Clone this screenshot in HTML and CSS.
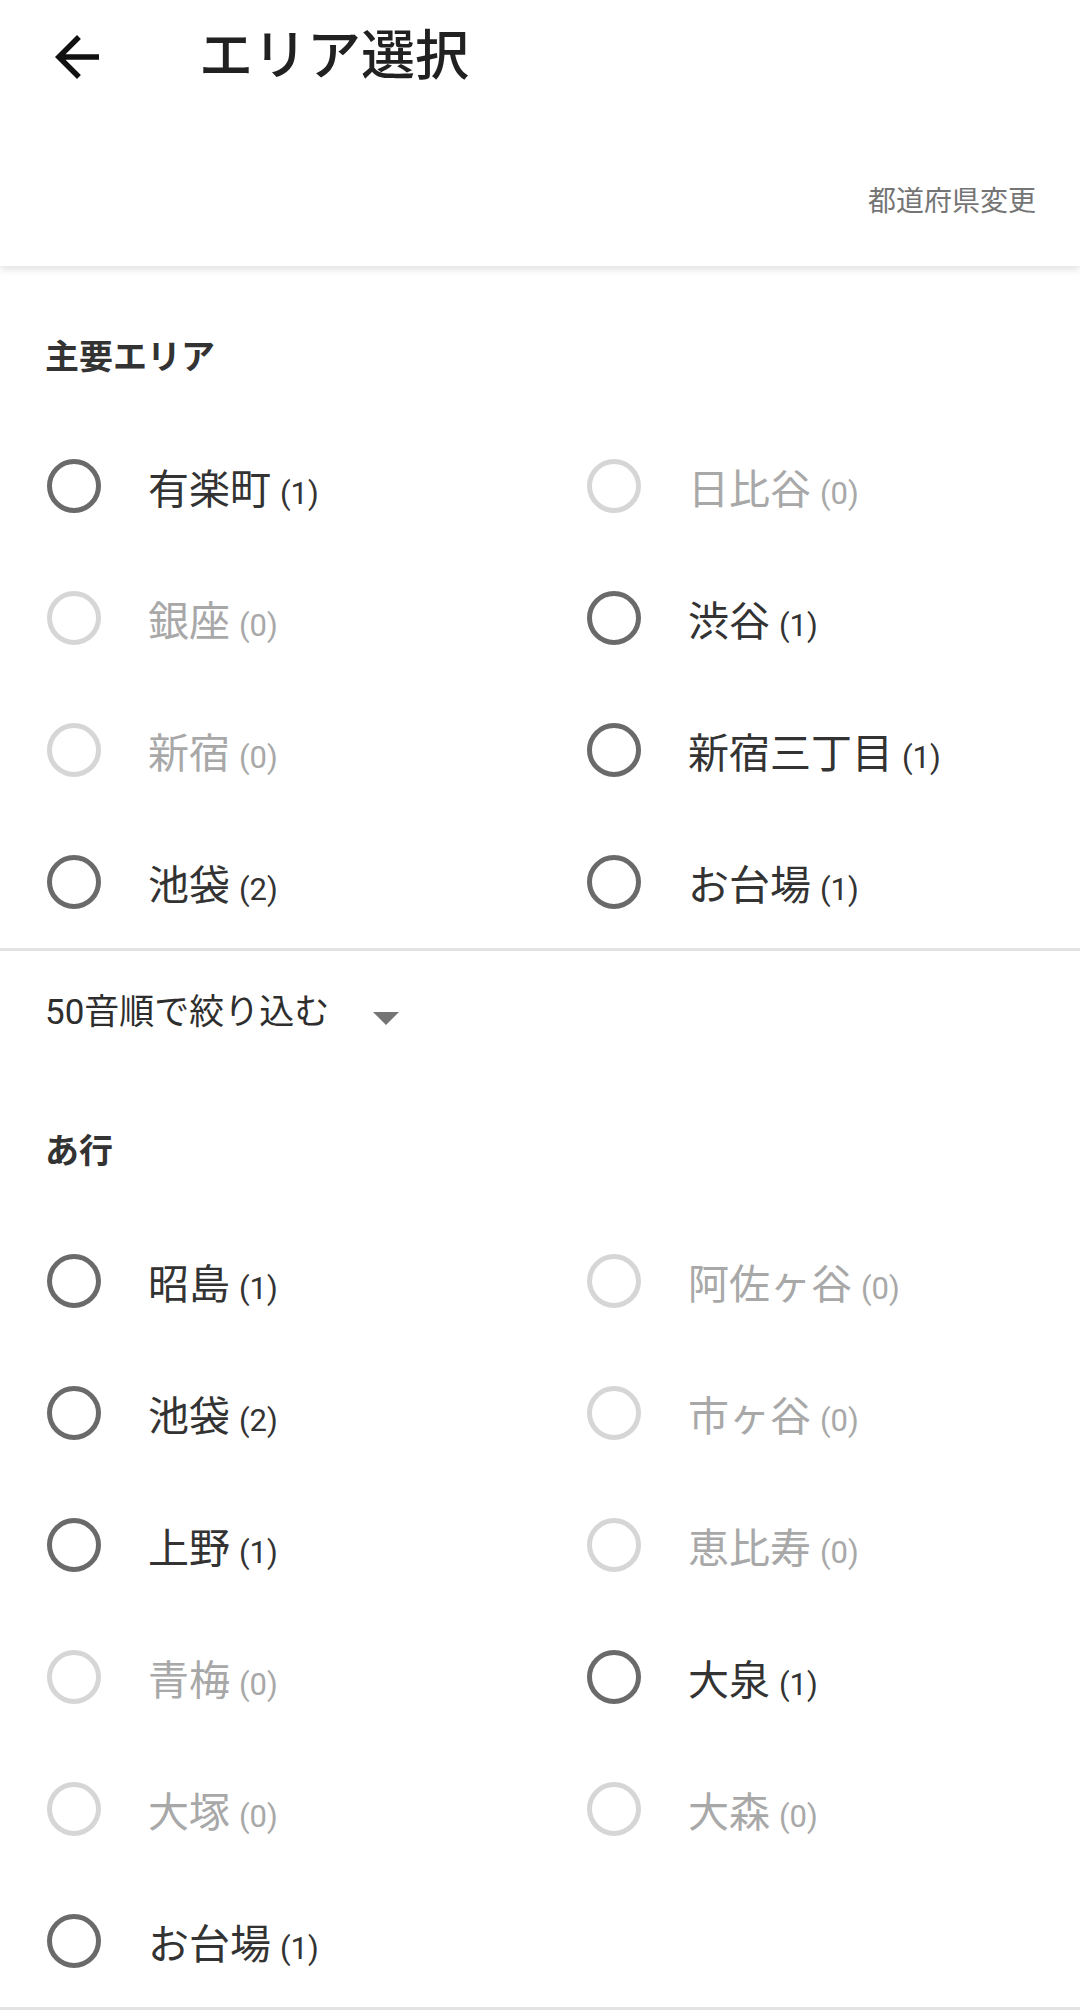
FILE: index.html
```html
<!DOCTYPE html>
<html lang="ja">
<head>
<meta charset="utf-8">
<title>エリア選択</title>
<link rel="stylesheet" href="styles.css">
</head>
<body>
<header class="header">
  <div class="toolbar">
    <span class="back" aria-label="戻る">
      <svg viewBox="0 0 24 24" width="66" height="66"><path d="M20 11H7.83l5.59-5.59L12 4l-8 8 8 8 1.41-1.41L7.83 13H20v-2z" fill="#111"/></svg>
    </span>
    <h1 class="title">エリア選択</h1>
  </div>
  <div class="subbar"><span class="change-pref">都道府県変更</span></div>
</header>

<main>
  <section class="section">
    <h2 class="section-title">主要エリア</h2>
    <div class="grid">
      <label class="item"><span class="radio"></span><span class="name">有楽町<span class="count">(1)</span></span></label>
      <label class="item disabled"><span class="radio"></span><span class="name">日比谷<span class="count">(0)</span></span></label>
      <label class="item disabled"><span class="radio"></span><span class="name">銀座<span class="count">(0)</span></span></label>
      <label class="item"><span class="radio"></span><span class="name">渋谷<span class="count">(1)</span></span></label>
      <label class="item disabled"><span class="radio"></span><span class="name">新宿<span class="count">(0)</span></span></label>
      <label class="item"><span class="radio"></span><span class="name">新宿三丁目<span class="count">(1)</span></span></label>
      <label class="item"><span class="radio"></span><span class="name">池袋<span class="count">(2)</span></span></label>
      <label class="item"><span class="radio"></span><span class="name">お台場<span class="count">(1)</span></span></label>
    </div>
  </section>

  <section class="section bordered">
    <div class="filter">
      <span class="filter-label">50音順で絞り込む</span>
      <svg class="caret" viewBox="0 0 26 13" width="26" height="13"><polygon points="0,0 26,0 13,13" fill="#757575"/></svg>
    </div>
    <h2 class="section-title kana">あ行</h2>
    <div class="grid">
      <label class="item"><span class="radio"></span><span class="name">昭島<span class="count">(1)</span></span></label>
      <label class="item disabled"><span class="radio"></span><span class="name">阿佐ヶ谷<span class="count">(0)</span></span></label>
      <label class="item"><span class="radio"></span><span class="name">池袋<span class="count">(2)</span></span></label>
      <label class="item disabled"><span class="radio"></span><span class="name">市ヶ谷<span class="count">(0)</span></span></label>
      <label class="item"><span class="radio"></span><span class="name">上野<span class="count">(1)</span></span></label>
      <label class="item disabled"><span class="radio"></span><span class="name">恵比寿<span class="count">(0)</span></span></label>
      <label class="item disabled"><span class="radio"></span><span class="name">青梅<span class="count">(0)</span></span></label>
      <label class="item"><span class="radio"></span><span class="name">大泉<span class="count">(1)</span></span></label>
      <label class="item disabled"><span class="radio"></span><span class="name">大塚<span class="count">(0)</span></span></label>
      <label class="item disabled"><span class="radio"></span><span class="name">大森<span class="count">(0)</span></span></label>
      <label class="item"><span class="radio"></span><span class="name">お台場<span class="count">(1)</span></span></label>
    </div>
  </section>
  <div class="end-line"></div>
</main>
</body>
</html>
```

FILE: styles.css
```css
* { box-sizing: border-box; }

html, body {
  margin: 0;
  padding: 0;
  background: #ffffff;
}

body {
  font-family: Roboto, "Noto Sans CJK JP", "Noto Sans", sans-serif;
  color: #333333;
  width: 1080px;
  overflow: hidden;
}

.header {
  height: 266px;
  background: #ffffff;
  box-shadow: 0 3px 8px rgba(0, 0, 0, 0.13);
  position: relative;
  z-index: 1;
  display: flex;
  flex-direction: column;
}

.toolbar {
  height: 114px;
  display: flex;
  align-items: center;
}

.back {
  width: 66px;
  height: 66px;
  margin-left: 44px;
  display: flex;
}

.title {
  margin: 0 0 0 89px;
  font-size: 54px;
  font-weight: 500;
  color: #212121;
  line-height: 64px;
  letter-spacing: 0;
}

.subbar {
  display: flex;
  justify-content: flex-end;
  padding: 68px 44px 0 0;
}

.change-pref {
  font-size: 28px;
  line-height: 40px;
  color: #757575;
}

.section-title {
  margin: 0;
  padding: 67px 0 39px 45px;
  font-size: 34px;
  line-height: 48px;
  font-weight: 700;
  color: #333333;
}

.section-title.kana {
  padding-top: 90px;
  padding-bottom: 40px;
}

.grid {
  display: grid;
  grid-template-columns: 540px 540px;
  grid-auto-rows: 132px;
}

.item {
  display: flex;
  align-items: center;
  padding-left: 47px;
}

.radio {
  width: 54px;
  height: 54px;
  border: 5px solid #6a6a6a;
  border-radius: 50%;
  flex: none;
}

.name {
  margin-left: 47px;
  margin-top: 12px;
  font-size: 41px;
  line-height: 56px;
  color: #333333;
  white-space: nowrap;
}

.count {
  font-size: 31px;
  margin-left: 9px;
}

.item.disabled .radio {
  border-color: #d6d6d6;
}

.item.disabled .name {
  color: #a8a8a8;
}

.bordered {
  border-top: 3px solid #e3e3e3;
}

.filter {
  display: flex;
  align-items: center;
  padding: 38px 0 0 45px;
  height: 86px;
}

.filter-label {
  font-size: 35px;
  line-height: 48px;
  color: #2e2e2e;
}

.caret {
  margin-left: 44px;
  margin-top: 10px;
}

.end-line {
  height: 3px;
  background: #e3e3e3;
}
```
